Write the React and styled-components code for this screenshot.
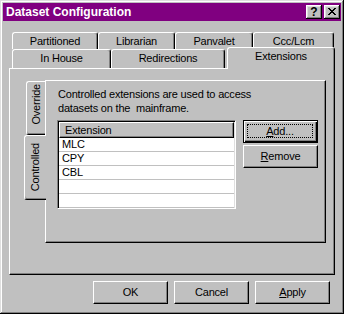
import React from "react";
import styled, { createGlobalStyle, css } from "styled-components";

const GlobalStyle = createGlobalStyle`
  html, body { margin: 0; padding: 0; background: #c0c0c0; }
  body {
    font-family: "Liberation Sans", Arial, sans-serif;
    font-size: 11px;
    letter-spacing: -0.2px;
    color: #000;
  }
`;

const HL = "1px solid #fff";

const raised = css`
  border-top: ${HL};
  border-left: ${HL};
  border-right: 1px solid #000;
  border-bottom: 1px solid #000;
  box-shadow: inset -1px -1px #808080;
`;

const Window = styled.div`
  width: 344px;
  height: 314px;
  box-sizing: border-box;
  padding: 3px;
  background: #c0c0c0;
  box-shadow: inset -1px -1px #000, inset 1px 1px #dfdfdf,
    inset -2px -2px #808080, inset 2px 2px #fff;
  display: flex;
  flex-direction: column;
`;

const TitleBar = styled.div`
  height: 18px;
  background: #800080;
  display: flex;
  align-items: center;
  padding: 0 1px 0 3px;
`;

const Title = styled.div`
  color: #fff;
  font-weight: bold;
  font-size: 12px;
  letter-spacing: 0;
`;

const CaptionButtons = styled.div`
  margin-left: auto;
  display: flex;
  gap: 2px;
`;

const CaptionButton = styled.div`
  width: 16px;
  height: 14px;
  box-sizing: border-box;
  background: #c0c0c0;
  box-shadow: inset -1px -1px #000, inset 1px 1px #fff,
    inset -2px -2px #808080, inset 2px 2px #dfdfdf;
  display: flex;
  align-items: center;
  justify-content: center;
  font-weight: bold;
  font-size: 12px;
  line-height: 12px;
  letter-spacing: 0;
  padding-bottom: 1px;
`;

const Body = styled.div`
  flex: 1;
  padding: 11px 6px 0;
  display: flex;
  flex-direction: column;
`;

const TabRow = styled.div`
  display: flex;
  align-items: flex-start;
  height: ${(p) => p.$h}px;
  margin: 0 1px 0 3px;
`;

const Tab = styled.div`
  box-sizing: border-box;
  width: ${(p) => (p.$w ? `${p.$w}px` : "auto")};
  flex: ${(p) => (p.$w ? "none" : 1)};
  height: ${(p) => p.$h}px;
  border-top: ${HL};
  border-left: ${HL};
  border-right: 1px solid #000;
  border-top-left-radius: 3px;
  border-top-right-radius: 3px;
  box-shadow: inset -1px 0 #808080;
  background: #c0c0c0;
  text-align: center;
  padding-top: 2px;
  line-height: 13px;
  ${(p) =>
    p.$selected &&
    css`
      position: relative;
      z-index: 2;
      height: 22px;
      margin: -2px -1px 0 2px;
      padding-top: 2px;
    `}
`;

const Panel = styled.div`
  height: 207px;
  box-sizing: border-box;
  ${raised};
  display: flex;
  align-items: flex-start;
  padding: 11px 8px 0 14px;
`;

const VTabs = styled.div`
  width: 21px;
  display: flex;
  flex-direction: column;
  padding-top: 1px;
`;

const VTab = styled.div`
  box-sizing: border-box;
  height: ${(p) => p.$h}px;
  margin-left: ${(p) => (p.$selected ? 0 : 2)}px;
  margin-right: ${(p) => (p.$selected ? -1 : 0)}px;
  position: relative;
  z-index: ${(p) => (p.$selected ? 2 : 1)};
  background: #c0c0c0;
  border-top: ${HL};
  border-left: ${HL};
  border-bottom: 1px solid #000;
  border-radius: 3px 0 0 3px;
  box-shadow: inset 0 -1px #808080;
  display: flex;
  align-items: center;
  justify-content: center;
  padding-bottom: ${(p) => p.$pb || 0}px;
`;

const VLabel = styled.span`
  writing-mode: vertical-rl;
  transform: rotate(180deg);
  line-height: 13px;
`;

const InnerPanel = styled.div`
  width: 281px;
  height: 163px;
  box-sizing: border-box;
  border-top: ${HL};
  border-left: ${HL};
  border-right: 1px solid #000;
  border-bottom: 1px solid #000;
  box-shadow: inset -1px -1px #808080;
  padding: 6px 0 0 11px;
`;

const Description = styled.p`
  margin: 0 0 5px 1px;
  line-height: 14px;
  width: 230px;
`;

const ListRow = styled.div`
  display: flex;
  align-items: flex-start;
  gap: 7px;
`;

const ListBox = styled.div`
  width: 179px;
  height: 89px;
  box-sizing: border-box;
  background: #fff;
  border: 1px solid;
  border-color: #808080 #fff #fff #808080;
  box-shadow: inset 1px 1px #000, inset -1px -1px #dfdfdf;
  padding: 1px;
  overflow: hidden;
`;

const ListHeader = styled.div`
  height: 16px;
  box-sizing: border-box;
  background: #c0c0c0;
  border-top: 1px solid #fff;
  border-left: 1px solid #fff;
  border-right: 1px solid #000;
  border-bottom: 1px solid #000;
  box-shadow: inset -1px -1px #808080;
  padding-left: 5px;
  line-height: 14px;
`;

const ListItem = styled.div`
  height: 14px;
  box-sizing: border-box;
  border-bottom: 1px solid #c0c0c0;
  padding-left: 3px;
  line-height: 13px;
`;

const ButtonColumn = styled.div`
  display: flex;
  flex-direction: column;
  gap: 2px;
`;

const PushButton = styled.div`
  width: 75px;
  height: 23px;
  box-sizing: border-box;
  background: #c0c0c0;
  ${raised};
  display: flex;
  align-items: center;
  justify-content: center;
  line-height: 13px;
  ${(p) =>
    p.$default &&
    css`
      border: 1px solid #000;
      box-shadow: inset 1px 1px #fff, inset -1px -1px #000,
        inset -2px -2px #808080;
      padding: 3px 4px 4px 3px;
    `}
`;

const FocusRing = styled.span`
  flex: 1;
  align-self: stretch;
  border: 1px dotted #000;
  display: flex;
  align-items: center;
  justify-content: center;
`;

const ButtonBar = styled.div`
  display: flex;
  justify-content: flex-end;
  gap: 6px;
  margin-top: 6px;
  padding-right: 5px;
`;

export default function App() {
  return (
    <>
      <GlobalStyle />
      <Window>
        <TitleBar>
          <Title>Dataset Configuration</Title>
          <CaptionButtons>
            <CaptionButton>?</CaptionButton>
            <CaptionButton>
              <svg width="8" height="7" viewBox="0 0 8 7" shapeRendering="crispEdges">
                <path d="M0 0h2v1h-2zM6 0h2v1h-2zM1 1h2v1h-2zM5 1h2v1h-2zM2 2h4v1h-4zM3 3h2v1h-2zM2 4h4v1h-4zM1 5h2v1h-2zM5 5h2v1h-2zM0 6h2v1h-2zM6 6h2v1h-2z" fill="#000" />
              </svg>
            </CaptionButton>
          </CaptionButtons>
        </TitleBar>
        <Body>
          <TabRow $h={17}>
            <Tab $w={86} $h={17}>Partitioned</Tab>
            <Tab $w={77} $h={17}>Librarian</Tab>
            <Tab $w={78} $h={17}>Panvalet</Tab>
            <Tab $h={17}>Ccc/Lcm</Tab>
          </TabRow>
          <TabRow $h={19}>
            <Tab $w={99} $h={19}>In House</Tab>
            <Tab $w={114} $h={19}>Redirections</Tab>
            <Tab $h={19} $selected>Extensions</Tab>
          </TabRow>
          <Panel>
            <VTabs>
              <VTab $h={54} $pb={8}>
                <VLabel>Override</VLabel>
              </VTab>
              <VTab $h={65} $selected>
                <VLabel>Controlled</VLabel>
              </VTab>
            </VTabs>
            <InnerPanel>
              <Description>
                Controlled extensions are used to access datasets on the&nbsp; mainframe.
              </Description>
              <ListRow>
                <ListBox>
                  <ListHeader>Extension</ListHeader>
                  <ListItem>MLC</ListItem>
                  <ListItem>CPY</ListItem>
                  <ListItem>CBL</ListItem>
                  <ListItem />
                  <ListItem />
                </ListBox>
                <ButtonColumn>
                  <PushButton $default>
                    <FocusRing>
                      <span>
                        <u>A</u>dd...
                      </span>
                    </FocusRing>
                  </PushButton>
                  <PushButton>
                    <span>
                      <u>R</u>emove
                    </span>
                  </PushButton>
                </ButtonColumn>
              </ListRow>
            </InnerPanel>
          </Panel>
          <ButtonBar>
            <PushButton>OK</PushButton>
            <PushButton>Cancel</PushButton>
            <PushButton>
              <span>
                <u>A</u>pply
              </span>
            </PushButton>
          </ButtonBar>
        </Body>
      </Window>
    </>
  );
}
